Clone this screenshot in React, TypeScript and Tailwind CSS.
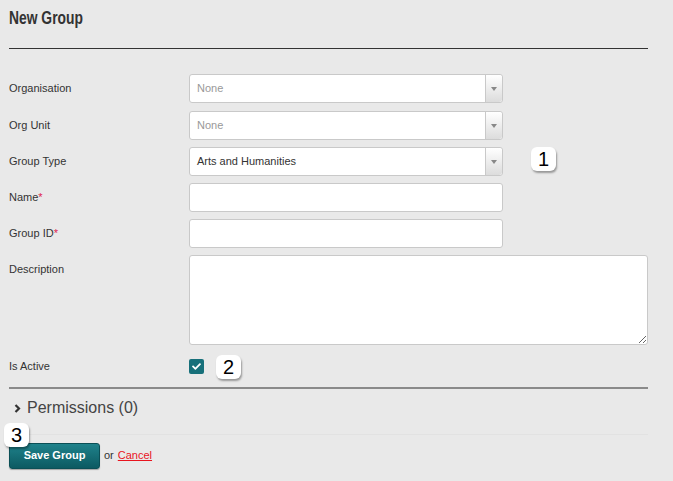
import React from "react";
import { FaCheck } from "react-icons/fa";

const font = "font-['Liberation_Sans',Arial,sans-serif]";

const Badge = ({ n, className }: { n: string; className: string }) => (
  <div
    className={`absolute flex h-[24px] w-[25px] items-center justify-center rounded-[6px] bg-white text-[20px] leading-none text-black shadow-[1px_2px_2px_rgba(0,0,0,0.35)] ${className}`}
  >
    {n}
  </div>
);

const Select = ({ value, muted }: { value: string; muted?: boolean }) => (
  <div className="flex h-[29px] w-[314px] rounded-[3px] border border-[#c9c9c9] bg-white">
    <div className={`flex flex-1 items-center pl-[7px] text-[11px] ${muted ? "text-[#999]" : "text-[#333]"}`}>
      {value}
    </div>
    <div className="flex w-[17px] items-center justify-center rounded-r-[3px] border-l border-[#c9c9c9] bg-gradient-to-b from-white to-[#dcdcdc]">
      <div className="h-0 w-0 border-x-[3px] border-t-[4px] border-x-transparent border-t-[#888]" />
    </div>
  </div>
);

const TextInput = () => (
  <div className="h-[29px] w-[314px] rounded-[3px] border border-[#c9c9c9] bg-white" />
);

const Row = ({ label, required, children }: { label: string; required?: boolean; children: React.ReactNode }) => (
  <div className="flex">
    <div className="w-[180px] pt-[6px] text-[11px] text-[#333]">
      {label}
      {required && <span className="text-[#e0234e]">*</span>}
    </div>
    {children}
  </div>
);

export default function App() {
  return (
    <div className={`relative min-h-[481px] w-[673px] bg-[#e9e9e9] ${font}`}>
      <div className="w-[648px] pl-[9px]">
        <h1 className="pt-[7px] text-[18px] font-bold leading-[22px] text-[#333]">
          <span className="inline-block origin-left scale-x-[0.77]">New Group</span>
        </h1>
        <div className="mt-[19px] h-px bg-[#333]" />

        <div className="mt-[25px] flex flex-col gap-[7px]">
          <div className="mb-px">
            <Row label="Organisation">
              <Select value="None" muted />
            </Row>
          </div>
          <Row label="Org Unit">
            <Select value="None" muted />
          </Row>
          <Row label="Group Type">
            <Select value="Arts and Humanities" />
          </Row>
          <Row label="Name" required>
            <TextInput />
          </Row>
          <Row label="Group ID" required>
            <TextInput />
          </Row>
          <Row label="Description">
            <textarea className="h-[90px] w-[459px] resize rounded-[3px] border border-[#c9c9c9] bg-white" />
          </Row>
        </div>

        <div className="mt-[13px] flex items-center">
          <div className="w-[180px] text-[11px] text-[#333]">Is Active</div>
          <div className="flex h-[15px] w-[15px] items-center justify-center rounded-[2px] bg-[#17707a]">
            <FaCheck className="text-[9px] text-white" />
          </div>
        </div>

        <div className="mt-[12px] h-[2px] bg-[#8a8a8a]" />

        <div className="flex h-[38px] items-center pl-[5px] text-[#444]">
          <svg width="7" height="9" viewBox="0 0 7 9" className="mt-px">
            <path d="M1.5 1 L5 4.5 L1.5 8" fill="none" stroke="#333" strokeWidth="2.2" />
          </svg>
          <span className="ml-[6px] text-[16px]">Permissions (0)</span>
        </div>

        <div className="mt-[7px] h-px bg-[#e2e2e2]" />

        <div className="mt-[8px] flex items-center text-[11px]">
          <button className="h-[26px] w-[91px] rounded-[3px] border border-[#0b4f56] bg-gradient-to-b from-[#1f828b] to-[#0c5a62] text-[11px] font-bold text-white shadow-[0_1px_1px_rgba(0,0,0,0.3)]">
            Save Group
          </button>
          <span className="ml-[4px] text-[#333]">or</span>
          <a className="ml-[4px] text-[#e8141e] underline">Cancel</a>
        </div>
      </div>

      <Badge n="1" className="left-[531px] top-[147px]" />
      <Badge n="2" className="left-[216px] top-[355px]" />
      <Badge n="3" className="left-[4px] top-[423px]" />
    </div>
  );
}
